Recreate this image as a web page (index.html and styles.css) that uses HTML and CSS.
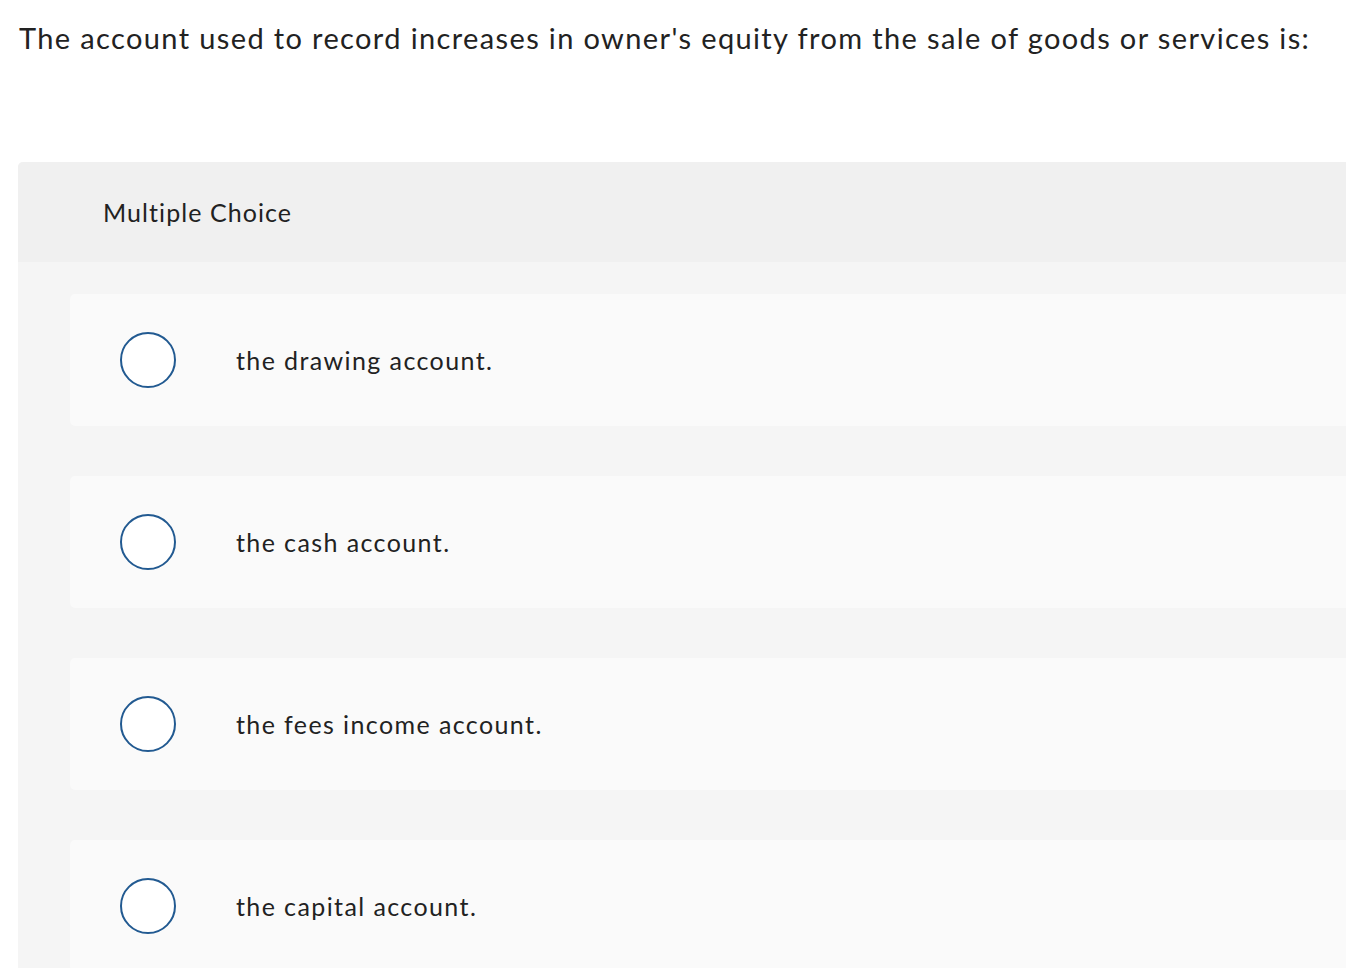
FILE: index.html
```html
<!DOCTYPE html>
<html lang="en">
<head>
<meta charset="utf-8">
<title>Multiple Choice</title>
<link rel="stylesheet" href="styles.css">
</head>
<body>
<div class="page">
  <p class="question">The account used to record increases in owner's equity from the sale of goods or services is:</p>
  <section class="mc">
    <header class="mc-header">Multiple Choice</header>
    <div class="mc-body">
      <label class="option"><span class="radio"></span><span class="option-text">the drawing account.</span></label>
      <label class="option"><span class="radio"></span><span class="option-text">the cash account.</span></label>
      <label class="option"><span class="radio"></span><span class="option-text">the fees income account.</span></label>
      <label class="option"><span class="radio"></span><span class="option-text">the capital account.</span></label>
    </div>
  </section>
</div>
</body>
</html>
```
FILE: styles.css
```css
html, body {
  margin: 0;
  padding: 0;
  background: #ffffff;
  overflow: hidden;
}
body {
  font-family: "Lato", "Liberation Sans", sans-serif;
  color: #222222;
  font-variant-ligatures: none;
}
.page {
  padding: 18px 0 0 18px;
}
.question {
  margin: 0 0 0 1px;
  font-size: 29px;
  line-height: 40px;
  letter-spacing: 1.37px;
  color: #222222;
}
.mc {
  margin-top: 104px;
  width: 1400px;
  border-radius: 5px 0 0 0;
  overflow: hidden;
  background: #f5f5f5;
}
.mc-header {
  height: 100px;
  background: #f0f0f0;
  display: flex;
  align-items: center;
  padding-left: 85px;
  font-size: 25px;
  letter-spacing: 1.07px;
  color: #222222;
}
.mc-body {
  padding: 32px 0 0 52px;
  display: flex;
  flex-direction: column;
  gap: 50px;
}
.option {
  height: 132px;
  background: #fafafa;
  border-radius: 5px 0 0 5px;
  display: flex;
  align-items: center;
  padding-left: 50px;
}
.radio {
  width: 52px;
  height: 52px;
  border: 2px solid #225a91;
  border-radius: 50%;
  background: #ffffff;
  flex: none;
}
.option-text {
  margin-left: 60px;
  font-size: 25px;
  letter-spacing: 1.4px;
  color: #222222;
}
```
